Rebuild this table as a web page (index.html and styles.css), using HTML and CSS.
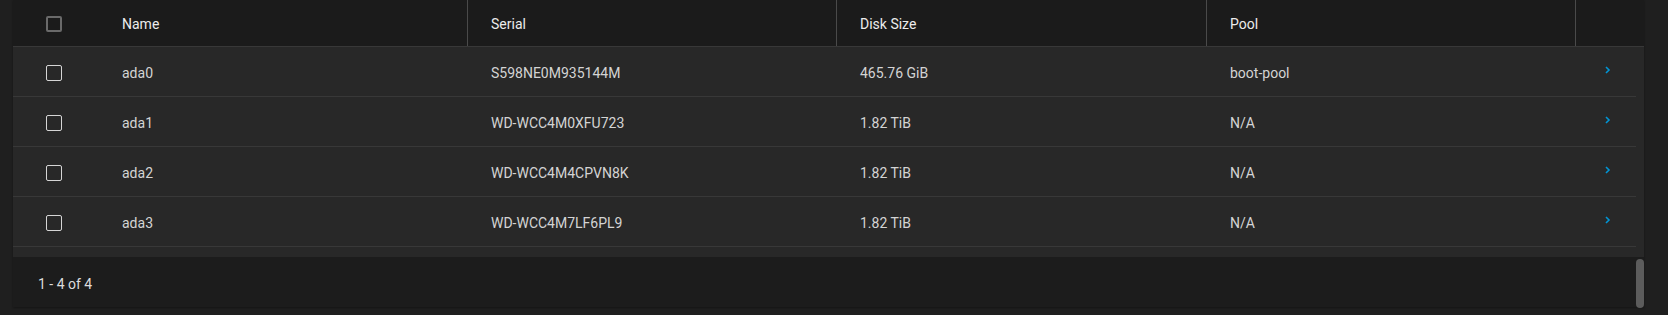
FILE: index.html
```html
<!DOCTYPE html>
<html lang="en">
<head>
<meta charset="utf-8">
<title>Disks</title>
<link rel="stylesheet" href="styles.css">
</head>
<body>
<div class="page">
  <div class="card">
    <div class="thead grid">
      <div class="cell check"><span class="box box-head"></span></div>
      <div class="cell">Name</div>
      <div class="cell div">Serial</div>
      <div class="cell div">Disk Size</div>
      <div class="cell div">Pool</div>
      <div class="cell div"></div>
    </div>
    <div class="tbody">
      <div class="row grid">
        <div class="cell check"><span class="box"></span></div>
        <div class="cell">ada0</div>
        <div class="cell">S598NE0M935144M</div>
        <div class="cell">465.76 GiB</div>
        <div class="cell">boot-pool</div>
        <div class="cell act"><svg class="chev" width="6" height="8" viewBox="0 0 6 8"><path d="M1 1 L4 4 L1 7" fill="none" stroke="#0095d5" stroke-width="1.6"/></svg></div>
      </div>
      <div class="row grid">
        <div class="cell check"><span class="box"></span></div>
        <div class="cell">ada1</div>
        <div class="cell">WD-WCC4M0XFU723</div>
        <div class="cell">1.82 TiB</div>
        <div class="cell">N/A</div>
        <div class="cell act"><svg class="chev" width="6" height="8" viewBox="0 0 6 8"><path d="M1 1 L4 4 L1 7" fill="none" stroke="#0095d5" stroke-width="1.6"/></svg></div>
      </div>
      <div class="row grid">
        <div class="cell check"><span class="box"></span></div>
        <div class="cell">ada2</div>
        <div class="cell">WD-WCC4M4CPVN8K</div>
        <div class="cell">1.82 TiB</div>
        <div class="cell">N/A</div>
        <div class="cell act"><svg class="chev" width="6" height="8" viewBox="0 0 6 8"><path d="M1 1 L4 4 L1 7" fill="none" stroke="#0095d5" stroke-width="1.6"/></svg></div>
      </div>
      <div class="row grid">
        <div class="cell check"><span class="box"></span></div>
        <div class="cell">ada3</div>
        <div class="cell">WD-WCC4M7LF6PL9</div>
        <div class="cell">1.82 TiB</div>
        <div class="cell">N/A</div>
        <div class="cell act"><svg class="chev" width="6" height="8" viewBox="0 0 6 8"><path d="M1 1 L4 4 L1 7" fill="none" stroke="#0095d5" stroke-width="1.6"/></svg></div>
      </div>
    </div>
    <div class="footer">1 - 4 of 4</div>
    <div class="thumb"></div>
  </div>
</div>
</body>
</html>
```

FILE: styles.css
```css
* { box-sizing: border-box; }
html, body {
  margin: 0;
  padding: 0;
  background: #1f1f1f;
  font-family: Roboto, "Liberation Sans", sans-serif;
  font-size: 14px;
  overflow: hidden;
}
.page {
  padding: 0 23px 0 13px;
  height: 315px;
}
.card {
  position: relative;
  width: 1631px;
  background: #282828;
  box-shadow: 0 1px 2px rgba(0,0,0,0.35);
}
.grid {
  display: grid;
  grid-template-columns: 85px 369px 369px 370px 369px 1fr;
}
.thead {
  height: 47px;
  background: #1b1b1b;
  border-bottom: 1px solid #383838;
  color: #ececec;
  font-weight: 400;
}
.cell {
  display: flex;
  align-items: center;
  padding-left: 24px;
  white-space: nowrap;
}
.thead .cell { padding-top: 1px; }
.div { border-left: 1px solid #4a4a4a; padding-left: 23px; }
.check { padding-left: 33px; }
.box {
  display: block;
  width: 16px;
  height: 16px;
  border: 1.6px solid #d6d6d6;
  border-radius: 2px;
}
.box-head { border: 2px solid #6a6a6a; }
.tbody {
  background: #282828;
  padding-right: 8px;
  padding-bottom: 10px;
}
.row {
  height: 50px;
  border-bottom: 1px solid #383838;
  color: #d4d4d4;
}
.row .cell { padding-top: 2px; }
.row .act { padding-left: 30px; padding-top: 0; padding-bottom: 3px; }
.chev { display: block; }
.footer {
  height: 50px;
  background: #1c1c1c;
  color: #dcdcdc;
  display: flex;
  align-items: center;
  padding-left: 25px;
  padding-top: 4px;
}
.thumb {
  position: absolute;
  right: 0;
  bottom: -1px;
  width: 8px;
  height: 49px;
  border-radius: 4px;
  background: #5c5c5c;
}
```
